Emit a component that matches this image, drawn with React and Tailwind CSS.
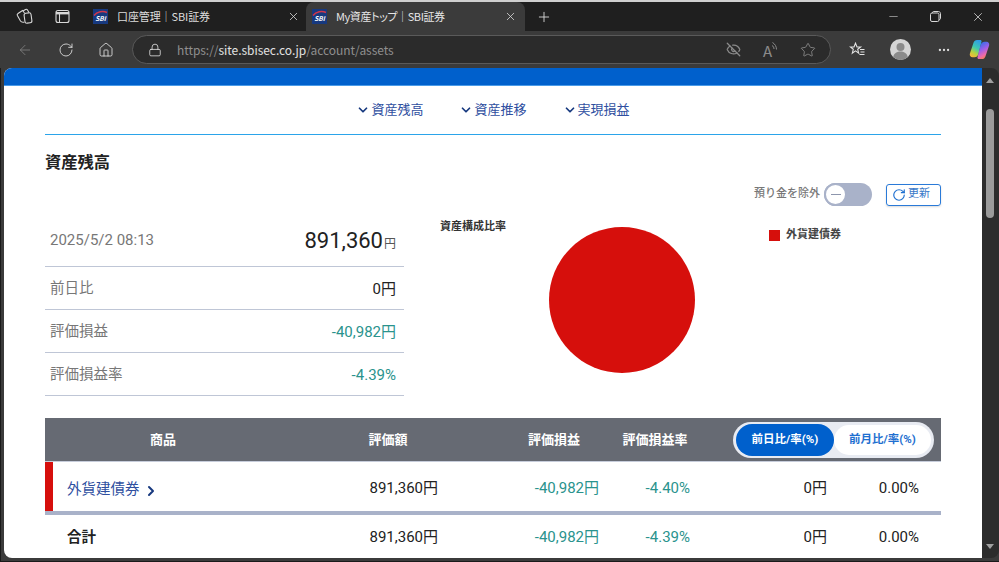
import { ChevronDown, ChevronRight, RotateCw, ArrowLeft, House, Lock, EyeOff, Star, Plus, X, Minus, Ellipsis } from "lucide-react";

const PAGE_FONT = "font-['Roboto','Noto_Sans_CJK_JP',sans-serif]";

function SbiIcon() {
  return (
    <svg className="shrink-0" width="15" height="15" viewBox="0 0 15 15">
      <rect width="15" height="15" fill="#17397f" />
      <path d="M1 6.500C4 2.500 10 1.500 14 3.500" fill="none" stroke="#d0364a" strokeWidth="1.500" />
      <text x="7.500" y="12" textAnchor="middle" fontSize="6.500" fontWeight="700" fontStyle="italic" fill="#ffffff">SBI</text>
    </svg>
  );
}

function CollectionsIcon() {
  return (
    <svg width="17" height="17" viewBox="0 0 17 17" fill="none" stroke="#d8d8d8" strokeWidth="1.100">
      <rect x="8.500" y="5" width="7" height="10" rx="2" transform="rotate(-8 12 10)" />
      <path d="M8.500 5 6.500 2.500 2 5.500c-.8.500-1 1.300-.6 2.100L4.500 13c.5.800 1.500 1.200 2.500 1.200H8.500" />
      <path d="M7 3 9.500 1.500c.8-.4 1.600-.2 2 .5L13 4.500" />
    </svg>
  );
}

function TabsIcon() {
  return (
    <svg width="15" height="15" viewBox="0 0 15 15" fill="none" stroke="#d8d8d8" strokeWidth="1.100">
      <rect x="1" y="1.500" width="13" height="12" rx="2" />
      <path d="M1 4.200h13" strokeWidth="2.400" />
      <path d="M4.500 5v8" />
    </svg>
  );
}

function ReadAloudIcon() {
  return (
    <div className="flex h-4 w-5 items-start text-[15px] leading-[17px] text-[#8b8b8b]">
      A
      <svg className="-ml-px" width="7" height="10" viewBox="0 0 7 10" fill="none" stroke="#8b8b8b" strokeWidth="1">
        <path d="M1.500 .5c2.500 1.500 4 4 4 7" />
        <path d="M1 3.500c1.300.7 2 2 2 3.500" />
      </svg>
    </div>
  );
}

function FavoritesIcon() {
  return (
    <svg width="17" height="15" viewBox="0 0 17 15" fill="none" stroke="#e4e4e4" strokeWidth="1.100">
      <path d="M6.500 1.200 8 5h3.600l-2.900 2.300 1 3.800-3.200-2.200-3.200 2.200 1-3.800L1.400 5H5z" />
      <path d="M11 7.500h4.500M11.500 10h4M10.500 12.500h5" />
    </svg>
  );
}

function ProfileIcon() {
  return (
    <svg width="21" height="21" viewBox="0 0 21 21">
      <circle cx="10.500" cy="10.500" r="10.500" fill="#d4d4d4" />
      <circle cx="10.500" cy="8" r="4" fill="#8a8a8a" />
      <path d="M3.200 18c1-4 4-5.400 7.300-5.400s6.300 1.400 7.300 5.400a10.500 10.500 0 0 1-14.600 0z" fill="#8a8a8a" />
    </svg>
  );
}

function CopilotIcon() {
  return (
    <svg width="21" height="21" viewBox="0 0 21 21">
      <defs>
        <linearGradient id="copilotLeft" x1="0.700" y1="0" x2="0.300" y2="1">
          <stop offset="0" stopColor="#2f9be8" />
          <stop offset="0.450" stopColor="#3fc8b0" />
          <stop offset="0.750" stopColor="#b5d33f" />
          <stop offset="1" stopColor="#f5b63a" />
        </linearGradient>
        <linearGradient id="copilotRight" x1="0.300" y1="0" x2="0.700" y2="1">
          <stop offset="0" stopColor="#2a6fe8" />
          <stop offset="0.450" stopColor="#a05fe8" />
          <stop offset="0.750" stopColor="#ef6aa8" />
          <stop offset="1" stopColor="#f58a3a" />
        </linearGradient>
      </defs>
      <path d="M8 1h3c.8 0 1.400.5 1.600 1.300L9.500 15c-.6 2-2 3.300-4 3.300H3.500C1.500 18.300.3 16.500.9 14.600L4.600 3.600C5.100 2 6.400 1 8 1z" fill="url(#copilotLeft)" />
      <path d="M13 20h-3c-.8 0-1.400-.5-1.600-1.300L11.500 6c.6-2 2-3.300 4-3.300h2c2 0 3.200 1.800 2.600 3.700l-3.700 11C15.900 19 14.600 20 13 20z" fill="url(#copilotRight)" />
    </svg>
  );
}

function TabStrip() {
  return (
    <div className="flex h-[29px] items-center bg-[#1f1f1f]">
      <div className="flex w-[87px] shrink-0 items-center">
        <div className="ml-4 flex w-[17px] justify-center">
          <CollectionsIcon />
        </div>
        <div className="ml-[22px] flex w-[15px] justify-center">
          <TabsIcon />
        </div>
        <div className="ml-[17px] h-[18px] w-px bg-[#555555]" />
      </div>
      <div className="flex w-[219px] items-center pl-[6px] pr-[6px]">
        <SbiIcon />
        <span className="ml-[9px] flex-1 truncate text-[11px] tracking-[-0.1px] text-[#dcdcdc] [font-feature-settings:'palt']">
          口座管理｜SBI証券
        </span>
        <X size={13} color="#d8d8d8" strokeWidth={1.500} />
      </div>
      <div className="flex h-full w-[219px] items-center rounded-t-[8px] bg-[#3b3b3b] pl-[6px] pr-[8px]">
        <SbiIcon />
        <span className="ml-[9px] flex-1 truncate text-[11px] tracking-[-0.4px] text-[#e6e6e6] [font-feature-settings:'palt']">
          My資産トップ｜SBI証券
        </span>
        <X size={13} color="#d8d8d8" strokeWidth={1.500} />
      </div>
      <div className="ml-[11px] flex w-4 justify-center">
        <Plus size={18} color="#e0e0e0" strokeWidth={1.300} />
      </div>
      <div className="ml-auto flex items-center">
        <Minus size={13} color="#b8b8b8" strokeWidth={1.300} />
        <svg className="ml-[30px]" width="11" height="11" viewBox="0 0 11 11" fill="none" stroke="#d8d8d8" strokeWidth="1">
          <rect x="0.500" y="2" width="8.500" height="8.500" rx="1.500" />
          <path d="M2.500 2V1.500c0-.5.5-1 1-1h5c1 0 2 1 2 2v5c0 .5-.5 1-1 1H9" />
        </svg>
        <X className="ml-[30px] mr-[14px]" size={14} color="#e0e0e0" strokeWidth={1.300} />
      </div>
    </div>
  );
}

function Toolbar() {
  return (
    <div className="flex h-[37px] items-center bg-[#3b3b3b]">
      <div className="ml-[17px] flex w-4 justify-center">
        <ArrowLeft size={18} color="#858585" strokeWidth={1.200} />
      </div>
      <div className="ml-[25px] flex w-4 justify-center">
        <RotateCw size={18} color="#e0e0e0" strokeWidth={1.300} />
      </div>
      <div className="ml-[24px] flex w-4 justify-center">
        <House size={16} color="#e0e0e0" strokeWidth={1.300} />
      </div>
      <div className="ml-[18px] flex h-[29px] w-[699px] items-center rounded-full border border-[#5a5a5a] bg-[#2b2b2b]">
        <Lock className="ml-[15px]" size={14} color="#e0e0e0" strokeWidth={1.400} />
        <span className="ml-[15px] text-[12px] tracking-[-0.05px] text-[#8f8f8f]">
          https://<span className="text-[#e2e2e2]">site.sbisec.co.jp</span>/account/assets
        </span>
        <div className="ml-auto flex items-center">
          <EyeOff size={15} color="#8b8b8b" strokeWidth={2} />
          <div className="ml-[22px]">
            <ReadAloudIcon />
          </div>
          <Star className="ml-[17px] mr-[14px]" size={16} color="#8b8b8b" strokeWidth={1.300} />
        </div>
      </div>
      <div className="ml-[18px] flex">
        <FavoritesIcon />
      </div>
      <div className="ml-[24px] flex">
        <ProfileIcon />
      </div>
      <div className="ml-[26px] flex">
        <Ellipsis size={14} color="#dddddd" strokeWidth={2} />
      </div>
      <div className="ml-[18px] flex">
        <CopilotIcon />
      </div>
    </div>
  );
}

function AnchorLink({ label }) {
  return (
    <div className="flex items-center">
      <ChevronDown size={14} color="#17397f" strokeWidth={3} />
      <span className="ml-px text-[13px] leading-[18px] text-[#2f4f9f]">{label}</span>
    </div>
  );
}

function SummaryRow({ label, value, teal }) {
  return (
    <div className="flex h-[43px] items-center justify-between border-b border-[#bfc6d6] pl-[5px] pr-[8px] pt-[2px]">
      <span className="text-[14.500px] text-[#777777]">{label}</span>
      <span className={`text-[15px] ${teal ? "text-[#2a938d]" : "text-[#222222]"}`}>{value}</span>
    </div>
  );
}

function Summary() {
  return (
    <div className="w-[359px] shrink-0">
      <div className="flex h-[52px] items-center justify-between border-b border-[#bfc6d6] pl-[5px] pr-[8px]">
        <span className="text-[15px] text-[#777777]">2025/5/2 08:13</span>
        <span className="text-[#222222]">
          <span className="text-[22px]">891,360</span>
          <span className="ml-px text-[12px] text-[#555555]">円</span>
        </span>
      </div>
      <SummaryRow label="前日比" value="0円" />
      <SummaryRow label="評価損益" value="-40,982円" teal />
      <SummaryRow label="評価損益率" value="-4.39%" teal />
    </div>
  );
}

function Allocation() {
  return (
    <div className="ml-[36px] flex flex-1 items-start">
      <div className="w-[109px] shrink-0 pt-[4px] text-[11px] font-bold leading-[16px] text-[#333333]">
        資産構成比率
      </div>
      <div className="mt-[12px] h-[146px] w-[146px] shrink-0 rounded-full bg-[#d60f0c]" />
      <div className="ml-[74px] mt-[12px] flex items-center">
        <div className="h-[11px] w-[11px] bg-[#d60f0c]" />
        <span className="ml-[6px] text-[11px] font-bold leading-[16px] text-[#444444]">外貨建債券</span>
      </div>
    </div>
  );
}

function ExcludeToggle() {
  return (
    <div className="flex items-center">
      <span className="text-[11px] font-medium text-[#777777]">預り金を除外</span>
      <div className="ml-1 flex h-[23px] w-[48px] items-center rounded-full bg-[#a9b2c9]">
        <div className="flex h-[23px] w-[23px] items-center justify-center rounded-full border-2 border-[#a9b2c9] bg-white">
          <div className="h-px w-[10px] bg-[#8d96ad]" />
        </div>
      </div>
      <div className="ml-[14px] flex h-[22px] w-[55px] items-center rounded-[3px] border border-[#2a7ad8] pl-[5px] shadow-[0_1px_2px_rgba(0,0,0,0.15)]">
        <RotateCw size={14} color="#1e6fd0" strokeWidth={2} />
        <span className="ml-[2px] text-[11px] text-[#3a78c8]">更新</span>
      </div>
    </div>
  );
}

function TableHeader() {
  return (
    <div className="grid h-[44px] grid-cols-[236px_214px_118px_84px_1fr] items-center border-b border-[#c7cddb] bg-[#666a73] text-center text-[13px] font-bold text-white">
      <div>商品</div>
      <div>評価額</div>
      <div>評価損益</div>
      <div>評価損益率</div>
      <div className="flex justify-end pr-[7px]">
        <div className="flex h-[36px] w-[201px] items-center rounded-full bg-[#e8ebf2] p-[3px] text-[11.500px]">
          <div className="flex h-[32px] w-[98px] items-center justify-center rounded-full bg-[#0060cc]">
            前日比/率(%)
          </div>
          <div className="flex h-[30px] flex-1 items-center justify-center rounded-full bg-white text-[#1e6fd0]">
            前月比/率(%)
          </div>
        </div>
      </div>
    </div>
  );
}

function ValueCells({ value, gain, rate }) {
  return (
    <>
      <div className="text-right text-[#222222]">{value}</div>
      <div className="text-right text-[#2a938d]">{gain}</div>
      <div className="text-right text-[#2a938d]">{rate}</div>
      <div className="text-right text-[#222222]">0円</div>
      <div className="text-right text-[#222222]">0.00%</div>
    </>
  );
}

function HoldingsTable() {
  return (
    <div className="mt-[22px]">
      <TableHeader />
      <div className="flex h-[53px] border-b-4 border-[#a9b2c9]">
        <div className="w-2 bg-[#d60f0c]" />
        <div className="grid flex-1 grid-cols-[228px_157px_161px_91px_137px_92px_22px] items-center pt-[3px] text-[15px]">
          <div className="flex items-center pl-[14px] pt-[3px] text-[14.500px] text-[#2f4f9f]">
            外貨建債券
            <ChevronRight className="ml-[3px] mt-[2px]" size={16} color="#17397f" strokeWidth={3} />
          </div>
          <ValueCells value="891,360円" gain="-40,982円" rate="-4.40%" />
        </div>
      </div>
      <div className="grid h-[43px] grid-cols-[236px_157px_161px_91px_137px_92px_22px] items-center pt-[2px] text-[15px]">
        <div className="pl-[22px] text-[14.500px] font-bold text-[#222222]">合計</div>
        <ValueCells value="891,360円" gain="-40,982円" rate="-4.39%" />
      </div>
    </div>
  );
}

function Page() {
  return (
    <div className={`h-[490px] flex-1 overflow-hidden rounded-tl-[8px] rounded-bl-[8px] bg-white ${PAGE_FONT}`}>
      <div className="h-[18px] border-b border-[#4a9be8] bg-[#0060cc]" />
      <div className="px-[41px]">
        <div className="flex h-[49px] items-center justify-center gap-[36px] border-b border-[#2ba4ea] pb-[1px]">
          <AnchorLink label="資産残高" />
          <AnchorLink label="資産推移" />
          <AnchorLink label="実現損益" />
        </div>
        <h2 className="mt-[16px] text-[16.300px] font-bold leading-[24px] text-[#222222]">資産残高</h2>
        <div className="mt-[8px] flex justify-end">
          <ExcludeToggle />
        </div>
        <div className="mt-[9px] flex">
          <Summary />
          <Allocation />
        </div>
        <HoldingsTable />
      </div>
    </div>
  );
}

function Scrollbar() {
  return (
    <div className="flex h-[490px] w-[17px] shrink-0 flex-col items-center rounded-r-[8px] bg-[#2c2c2c] pr-[2px]">
      <div className="mt-[10px] h-0 w-0 border-x-[4px] border-b-[5px] border-x-transparent border-b-[#a0a0a0]" />
      <div className="mt-[26px] h-[109px] w-2 rounded-full bg-[#9b9b9b]" />
      <div className="mt-auto mb-[9px] h-0 w-0 border-x-[4px] border-t-[5px] border-x-transparent border-t-[#a0a0a0]" />
    </div>
  );
}

export default function App() {
  return (
    <div className="h-[562px] w-[999px] overflow-hidden bg-[#3b3b3b] shadow-[inset_1px_-1px_0_#1a1a1a] font-['Noto_Sans_CJK_JP','Noto_Sans',sans-serif]">
      <div className="h-[2px] bg-[#cfcfcf]" />
      <TabStrip />
      <Toolbar />
      <div className="flex pl-1">
        <Page />
        <Scrollbar />
      </div>
    </div>
  );
}
